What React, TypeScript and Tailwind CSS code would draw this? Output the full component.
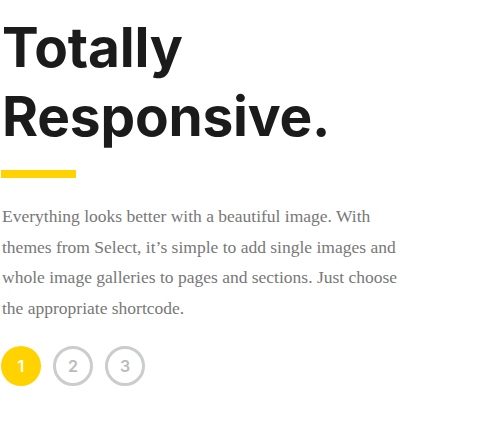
export default function App() {
  return (
    <div className="w-[500px] h-[422px] bg-white overflow-hidden">
      <div className="pl-[2px] pt-[13px]">
        {/* Titulo */}
        <h1 className="font-['Inter','Open_Sans',sans-serif] font-bold text-[55px] leading-[69px] text-[#1b1b1b] tracking-[-0.2px]">
          Totally
          <br />
          Responsive.
        </h1>

        {/* Barra amarela */}
        <div className="mt-[19px] w-[75px] h-[8px] bg-[#ffd200] -ml-[1px]" />

        {/* Texto */}
        <p className="mt-[23px] w-[400px] font-['Liberation_Serif','Times_New_Roman',serif] text-[17.5px] leading-[30.7px] text-[#777777]">
          Everything looks better with a beautiful image. With
          <br />
          themes from Select, it’s simple to add single images and
          <br />
          whole image galleries to pages and sections. Just choose
          <br />
          the appropriate shortcode.
        </p>

        {/* Paginação */}
        <div className="mt-[22px] -ml-[1px] flex items-center gap-[12px]">
          <button className="w-[40px] h-[40px] rounded-full bg-[#ffd200] text-white font-['Inter',sans-serif] font-semibold text-[16px] flex items-center justify-center">
            1
          </button>
          <button className="w-[40px] h-[40px] rounded-full border-[3px] border-[#cccccc] text-[#bbbbbb] font-['Inter',sans-serif] font-semibold text-[16px] flex items-center justify-center">
            2
          </button>
          <button className="w-[40px] h-[40px] rounded-full border-[3px] border-[#cccccc] text-[#bbbbbb] font-['Inter',sans-serif] font-semibold text-[16px] flex items-center justify-center">
            3
          </button>
        </div>
      </div>
    </div>
  );
}
